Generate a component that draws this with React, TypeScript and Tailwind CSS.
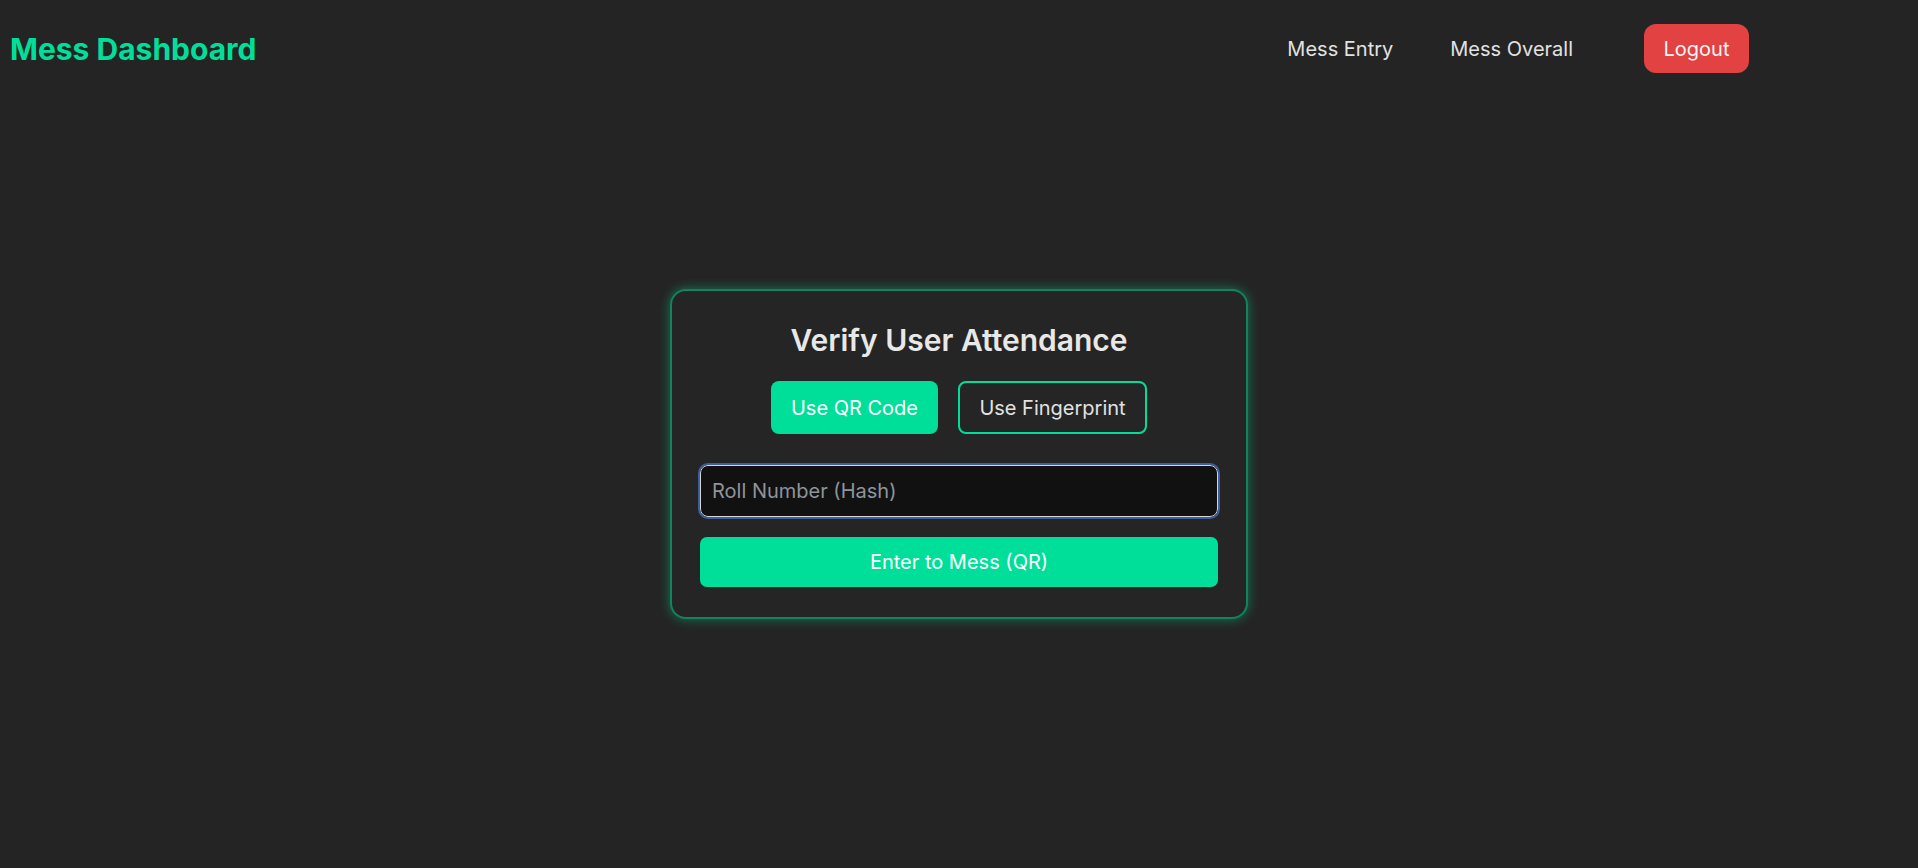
import { useState } from "react";

type Mode = "qr" | "fingerprint";

const NAV_LINKS = ["Mess Entry", "Mess Overall"];

export default function App() {
  const [mode, setMode] = useState<Mode>("qr");
  const [roll, setRoll] = useState("");

  return (
    <div className="min-h-screen bg-[#242424] text-[#e2e2e2] font-['Inter',_'Liberation_Sans',_sans-serif]">
      {/* Navbar */}
      <header className="flex h-[97px] items-center justify-between pl-[10px] pr-[169px]">
        <h1 className="text-[30px] font-bold leading-9 text-[#00df9a]">
          Mess Dashboard
        </h1>
        <nav className="flex items-center">
          {NAV_LINKS.map((link, i) => (
            <a
              key={link}
              href="#"
              className={`text-[20px] leading-7 text-[#e2e2e2] ${
                i > 0 ? "ml-[57px]" : ""
              }`}
            >
              {link}
            </a>
          ))}
          <button className="ml-[71px] h-[49px] w-[105px] rounded-[12px] bg-[#e34242] text-[20px] text-[#f5f5f5]">
            Logout
          </button>
        </nav>
      </header>

      {/* Verify card */}
      <main className="flex justify-center pt-[192px]">
        <div className="w-[578px] rounded-[16px] border-2 border-[#00df9a]/50 bg-[#252525] px-7 pt-[29px] pb-[30px] shadow-[0_0_12px_rgba(0,223,154,0.45)]">
          <h2 className="text-center text-[30px] font-semibold leading-10 text-[#e8e8e8]">
            Verify User Attendance
          </h2>

          <div className="mt-[21px] flex justify-center gap-[20px]">
            <button
              onClick={() => setMode("qr")}
              className={`h-[53px] w-[167px] rounded-[8px] text-[20px] ${
                mode === "qr"
                  ? "bg-[#00df9a] text-white"
                  : "border-2 border-[#00df9a] text-[#e2e2e2]"
              }`}
            >
              Use QR Code
            </button>
            <button
              onClick={() => setMode("fingerprint")}
              className={`h-[53px] w-[189px] rounded-[8px] text-[20px] ${
                mode === "fingerprint"
                  ? "bg-[#00df9a] text-white"
                  : "border-2 border-[#00df9a] text-[#e2e2e2]"
              }`}
            >
              Use Fingerprint
            </button>
          </div>

          <input
            autoFocus
            value={roll}
            onChange={(e) => setRoll(e.target.value)}
            placeholder="Roll Number (Hash)"
            className="mt-[31px] block h-[52px] w-full rounded-[8px] border border-[#d6d6d6] bg-[#111111] pl-[11px] text-[20px] text-[#e2e2e2] caret-[#e2e2e2] outline-2 outline-[#3d5f9e] placeholder:text-[#8e949c] focus:outline-2 focus:outline-[#3d5f9e]"
          />

          <button className="mt-[20px] h-[50px] w-full rounded-[7px] bg-[#00df9a] text-[20px] text-white">
            Enter to Mess ({mode === "qr" ? "QR" : "Fingerprint"})
          </button>
        </div>
      </main>
    </div>
  );
}
